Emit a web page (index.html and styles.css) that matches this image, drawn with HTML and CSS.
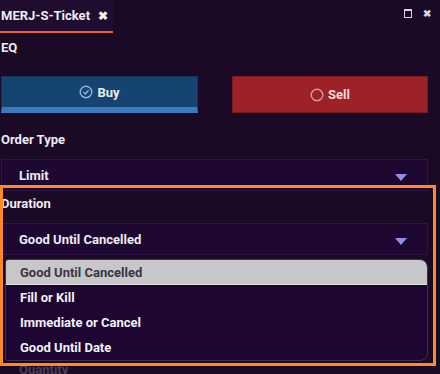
FILE: index.html
```html
<!DOCTYPE html>
<html lang="en">
<head>
  <meta charset="UTF-8">
  <meta name="viewport" content="width=device-width, initial-scale=1.0">
  <title>MERJ-S-Ticket</title>
  <link rel="stylesheet" href="styles.css">
</head>
<body>

  <header class="bar">
    <div class="tab">
      <span class="tab-title">MERJ-S-Ticket</span>
      <span class="tab-close">&#10006;</span>
    </div>
    <div class="controls">
      <span class="ctl-max"></span>
      <span class="ctl-close">&#10006;</span>
    </div>
  </header>

  <main class="ticket">
    <div class="symbol">EQ</div>

    <div class="sides">
      <button class="side buy">
        <svg width="14" height="14" viewBox="0 0 14 14">
          <circle cx="7" cy="7" r="5.8" fill="none" stroke="#8fb2dc" stroke-width="1.4"/>
          <path d="M4.4 7.1 L6.3 8.9 L9.6 5.3" fill="none" stroke="#8fb2dc" stroke-width="1.4"/>
        </svg>
        Buy
      </button>
      <button class="side sell">
        <svg width="14" height="14" viewBox="0 0 14 14">
          <circle cx="7" cy="7" r="5.8" fill="none" stroke="#d49a9e" stroke-width="1.4"/>
        </svg>
        Sell
      </button>
    </div>

    <div class="label">Order Type</div>
    <div class="select">
      <span>Limit</span>
      <span class="caret"></span>
    </div>

    <div class="label">Duration</div>
    <div class="select">
      <span>Good Until Cancelled</span>
      <span class="caret"></span>
    </div>

    <ul class="options">
      <li class="active">Good Until Cancelled</li>
      <li>Fill or Kill</li>
      <li>Immediate or Cancel</li>
      <li>Good Until Date</li>
    </ul>

    <div class="label faded">Quantity</div>
  </main>

  <div class="focus-frame"></div>

</body>
</html>
```

FILE: styles.css
```css
body {
  margin: 0;
  background-color: #1b0a26;
  color: #ecebf2;
  font-family: "Roboto", "Liberation Sans", sans-serif;
  font-weight: 700;
  font-size: 13px;
  overflow: hidden;
  height: 374px;
}

.bar {
  display: flex;
  justify-content: space-between;
  height: 33px;
}
.tab {
  width: 113px;
  height: 31px;
  background-color: #1f0c2e;
  border-bottom: 2px solid #e8622c;
  display: flex;
  align-items: center;
  gap: 8px;
}
.tab-title {
  padding-left: 1px;
}
.tab-close {
  font-size: 12px;
  color: #f2f2f2;
}
.controls {
  display: flex;
  align-items: center;
  gap: 11px;
  padding: 0 9px 6px 0;
}
.ctl-max {
  width: 6px;
  height: 6px;
  border: 1.5px solid #d8d6de;
  border-top-width: 2.5px;
}
.ctl-close {
  font-size: 10px;
  color: #d8d6de;
}

.ticket {
  padding: 0 12px 0 1px;
}
.symbol {
  margin-top: 7px;
  height: 16px;
  line-height: 16px;
}

.sides {
  display: grid;
  grid-template-columns: 197px 196px;
  justify-content: space-between;
  margin-top: 20px;
}
.side {
  height: 37px;
  border: 1px solid;
  font-family: inherit;
  font-weight: 700;
  font-size: 13px;
  display: flex;
  align-items: center;
  justify-content: center;
  gap: 4px;
  padding: 0;
}
.buy {
  background-color: #164470;
  border-color: #12355a;
  border-bottom: 6px solid #3a7bbd;
  color: #e9ecf4;
}
.sell {
  background-color: #9c2228;
  border-color: #7c1a22;
  color: #f0dcdd;
}

.label {
  margin-top: 19px;
  height: 16px;
  line-height: 16px;
}
.select {
  margin-top: 11px;
  height: 30px;
  border: 1px solid #2d1548;
  background-color: #1e0832;
  display: flex;
  align-items: center;
  justify-content: space-between;
  padding: 0 20px 0 17px;
}
.select .caret {
  width: 0;
  height: 0;
  border-left: 6px solid transparent;
  border-right: 6px solid transparent;
  border-top: 7px solid #8c8ff0;
  margin-top: 4px;
}
.select + .label {
  margin-top: 5px;
}

.options {
  list-style: none;
  margin: 4px 0 0 4px;
  padding: 0;
  border: 1px solid #3d3248;
  border-radius: 3px 8px 8px 3px;
  background-color: #1d0631;
  overflow: hidden;
}
.options li {
  height: 25px;
  line-height: 25px;
  padding-left: 14px;
  color: #f2f0f6;
}
.options li.active {
  background-color: #c7c6c8;
  color: #3a3640;
  border-bottom: 1px solid #e2e2e4;
  height: 24px;
}
.label.faded {
  margin-top: 1px;
  padding-left: 18px;
  color: #4c3d58;
}

.focus-frame {
  position: absolute;
  left: 0;
  top: 185px;
  width: 430px;
  height: 175px;
  border: 3.5px solid #ff8a26;
  pointer-events: none;
}
```
